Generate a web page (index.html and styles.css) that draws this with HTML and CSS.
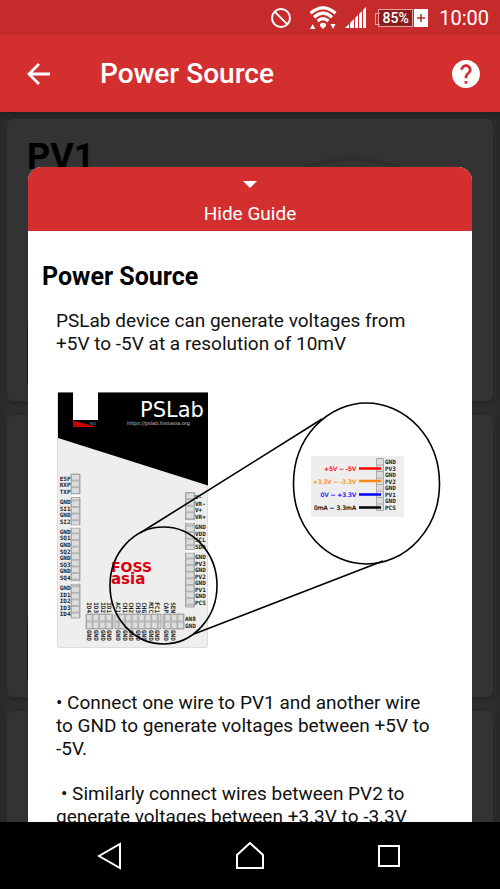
FILE: index.html
```html
<!DOCTYPE html>
<html lang="en">
<head>
<meta charset="utf-8">
<meta name="viewport" content="width=device-width, initial-scale=1">
<title>Power Source</title>
<link rel="stylesheet" href="styles.css">
</head>
<body>
<div class="status">
  <svg class="ic-block" viewBox="0 0 22 22"><circle cx="11" cy="11" r="9" fill="none" stroke="#fff" stroke-width="2"/><path d="M4.6 4.6l12.8 12.8" stroke="#fff" stroke-width="2"/></svg>
  <svg class="ic-wifi" viewBox="0 0 28 24"><g fill="none" stroke="#fff" stroke-width="3.2"><path d="M1.500 7.2Q14-3.400 26.500 7.2"/><path d="M5 11.2Q14 3.200 23 11.2"/><path d="M8.600 15Q14 10.200 19.400 15"/></g><path d="M11 18q3-2.500 6 0v2l-3 3-3-3z" fill="#fff"/><path d="M1 23l2.700-5 2.700 5zM21.500 18h5l-2.500 5z" fill="#fff"/></svg>
  <svg class="ic-signal" viewBox="0 0 22 22"><path d="M0 21l4-4v4H0zM5 16l4-4v9H5zM10 11l3-3v13h-3zM14 7l3-3v17h-3zM18 3l3-3v21h-3z" fill="#fff"/></svg>
  <span class="battery"><span class="battery-level">85%</span><svg class="ic-plus" viewBox="0 0 14 18"><path d="M0 0h14v18H0z" fill="#fff"/><path d="M3 9h8M7 5v8" stroke="#b52a2a" stroke-width="1.500"/></svg></span>
  <span class="clock">10:00</span>
</div>
<header class="appbar">
  <button class="icon-btn" aria-label="Back"><svg viewBox="0 0 26 26"><path d="M24 13H4M13 3L3 13l10 10" fill="none" stroke="#fff" stroke-width="2.800"/></svg></button>
  <h1>Power Source</h1>
  <button class="icon-btn" aria-label="Help"><svg class="ic-help" viewBox="2 2 20 20"><path fill="#fff" d="M12 2C6.480 2 2 6.480 2 12s4.480 10 10 10 10-4.480 10-10S17.520 2 12 2zm1 17h-2v-2h2v2zm2.070-7.750l-.9.920C13.450 12.900 13 13.500 13 15h-2v-.5c0-1.100.450-2.100 1.170-2.830l1.240-1.260c.370-.360.590-.860.590-1.410 0-1.100-.9-2-2-2s-2 .9-2 2H8c0-2.210 1.790-4 4-4s4 1.790 4 4c0 .880-.360 1.680-.930 2.250z"/></svg></button>
</header>
<main class="stage">
  <div class="cards">
    <section class="card">
      <div class="controls"><h2>PV1</h2><div class="field"></div><div class="action"></div></div>
      <svg class="dial" viewBox="0 0 210 210"><circle cx="105" cy="105" r="102" fill="none" stroke="#2e2e2e" stroke-width="5"/><circle cx="105" cy="105" r="85" fill="#2f2f2f"/></svg>
    </section>
    <section class="card"><div class="controls"><h2></h2><div class="field"></div><div class="action"></div></div></section>
    <section class="card"><div class="controls"><h2></h2><div class="field"></div><div class="action"></div></div></section>
  </div>
  <article class="sheet">
    <button class="hide"><svg viewBox="0 0 14 7"><path d="M0 0h14L7 7z" fill="#fff"/></svg><span>Hide Guide</span></button>
    <div class="guide">
      <h2>Power Source</h2>
      <p>PSLab device can generate voltages from +5V to -5V at a resolution of 10mV</p>
      <svg class="board" viewBox="56 390 388 262" role="img" aria-label="PSLab board pins">
        <rect x="57.500" y="392.500" width="150" height="255" rx="2" fill="#eee" stroke="#ddd"/>
        <path d="M58 392.500h150v93L58 438z"/>
        <path d="M73 392h25v28H73z" fill="#fff"/><path d="M73 420.500l24 6.500H73z" fill="#c00"/>
        <text class="tiny" x="90" y="425">SI1</text>
        <text class="brand" x="140" y="417">PSLab</text>
        <text class="url" x="127" y="425">https://pslab.fossasia.org</text>
        <defs>
          <pattern id="cell-l" x="71" y="474" width="9" height="6.600" patternUnits="userSpaceOnUse"><path d="M.500.500h8v5.600h-8z" fill="#ddd" stroke="#b4b4b4"/></pattern>
          <pattern id="cell-r" x="185.500" y="492.500" width="9" height="6.600" patternUnits="userSpaceOnUse"><path d="M.500.500h8v5.600h-8z" fill="#ddd" stroke="#b4b4b4"/></pattern>
          <pattern id="cell-b" x="86" y="614" width="6.530" height="7.500" patternUnits="userSpaceOnUse"><path d="M.500.500h5.530v6.500H.500z" fill="#ddd" stroke="#b4b4b4"/></pattern>
        </defs>
        <g stroke="#999" stroke-width=".8">
          <path fill="url(#cell-l)" d="M71 474h9v20h-9zM71 497.500h9V525h-9zM71 528h9v53h-9zM71 584h9v34h-9z"/>
          <path fill="url(#cell-r)" d="M185.500 492.500h9V520h-9zM185.500 523h9v26.500h-9zM185.500 553h9v54h-9z"/>
          <path fill="url(#cell-b)" d="M86 614h27v15H86zM115 614h46v15h-46zM163 614h21v15h-21z"/>
        </g>
        <path d="M71.500 494.500h8v2.500h-8zM71.500 525.500h8v2h-8zM71.500 581.500h8v2h-8zM186 520.500h8v2h-8zM186 550h8v2.500h-8z" fill="#fff"/>
        <text class="pin end"><tspan x="70.500" y="480.500">ESP</tspan><tspan x="70.500" y="487">RXP</tspan><tspan x="70.500" y="493.500">TXP</tspan><tspan x="70.500" y="504">GND</tspan><tspan x="70.500" y="510.500">SI1</tspan><tspan x="70.500" y="517">GND</tspan><tspan x="70.500" y="523.500">SI2</tspan><tspan x="70.500" y="533.500">GND</tspan><tspan x="70.500" y="540">SQ1</tspan><tspan x="70.500" y="547">GND</tspan><tspan x="70.500" y="553.500">SQ2</tspan><tspan x="70.500" y="560">GND</tspan><tspan x="70.500" y="566.500">SQ3</tspan><tspan x="70.500" y="573">GND</tspan><tspan x="70.500" y="579.500">SQ4</tspan><tspan x="70.500" y="590">GND</tspan><tspan x="70.500" y="596.500">ID1</tspan><tspan x="70.500" y="603">ID2</tspan><tspan x="70.500" y="609.500">ID3</tspan><tspan x="70.500" y="616">ID4</tspan></text>
        <text class="pin"><tspan x="195" y="499">V-</tspan><tspan x="195" y="505.500">VR-</tspan><tspan x="195" y="512">V+</tspan><tspan x="195" y="518.500">VR+</tspan><tspan x="195" y="529">GND</tspan><tspan x="195" y="535.500">VDD</tspan><tspan x="195" y="542">SCL</tspan><tspan x="195" y="548.500">SDA</tspan><tspan x="195" y="559">GND</tspan><tspan x="195" y="565.500">PV3</tspan><tspan x="195" y="572">GND</tspan><tspan x="195" y="578.500">PV2</tspan><tspan x="195" y="585">GND</tspan><tspan x="195" y="591.500">PV1</tspan><tspan x="195" y="598">GND</tspan><tspan x="195" y="604.500">PCS</tspan><tspan x="185" y="621">AN8</tspan><tspan x="185" y="628">GND</tspan></text>
        <g transform="rotate(90)">
          <text class="pin end"><tspan x="613" y="-87">ID4</tspan><tspan x="613" y="-94">ID3</tspan><tspan x="613" y="-100.500">ID2</tspan><tspan x="613" y="-107">ID1</tspan><tspan x="613" y="-116">AC1</tspan><tspan x="613" y="-122.500">CH1</tspan><tspan x="613" y="-129">CH2</tspan><tspan x="613" y="-135.500">CH3</tspan><tspan x="613" y="-142">CHG</tspan><tspan x="613" y="-148.500">MIC</tspan><tspan x="613" y="-155">FC1</tspan><tspan x="613" y="-164">CAP</tspan><tspan x="613" y="-170.500">SEN</tspan></text>
          <text class="pin"><tspan x="630" y="-87">GND</tspan><tspan x="630" y="-94">GND</tspan><tspan x="630" y="-100.500">GND</tspan><tspan x="630" y="-107">GND</tspan><tspan x="630" y="-116">GND</tspan><tspan x="630" y="-122.500">GND</tspan><tspan x="630" y="-129">GND</tspan><tspan x="630" y="-135.500">GND</tspan><tspan x="630" y="-142">GND</tspan><tspan x="630" y="-148.500">GND</tspan><tspan x="630" y="-155">GND</tspan><tspan x="630" y="-164">GND</tspan><tspan x="630" y="-170.500">GND</tspan></text>
        </g>
        <text class="foss" x="111" y="572">FOSS</text><text class="asia" x="111" y="584">asia</text>
        <rect x="311" y="456" width="93" height="61" fill="#eee"/>
        <path d="M376.500 458.500h7v52h-7zM376.500 465h7M376.500 471.500h7M376.500 478h7M376.500 484.500h7M376.500 491h7M376.500 497.500h7M376.500 504h7" fill="#ddd" stroke="#aaa"/>
        <g stroke-width="2.500"><path d="M359 468.500h22" stroke="#f00"/><path d="M359 481h22" stroke="#ff8a11"/><path d="M359 494.500h22" stroke="#00f"/><path d="M359 507.500h22" stroke="#000"/></g>
        <text class="pin"><tspan x="385" y="464">GND</tspan><tspan x="385" y="470.500">PV3</tspan><tspan x="385" y="477">GND</tspan><tspan x="385" y="483.500">PV2</tspan><tspan x="385" y="490">GND</tspan><tspan x="385" y="496.500">PV1</tspan><tspan x="385" y="503">GND</tspan><tspan x="385" y="510">PCS</tspan></text>
        <text class="range"><tspan x="356" y="471" fill="#f00" stroke="#f00">+5V ~ -5V</tspan><tspan x="356" y="483.500" fill="#ff8a11" stroke="#ff8a11">+3.3V ~ -3.3V</tspan><tspan x="356" y="496.500" fill="#00f" stroke="#00f">0V ~ +3.3V</tspan><tspan x="356" y="509.500" stroke="#000">0mA ~ 3.3mA</tspan></text>
        <g fill="none" stroke="#000" stroke-width="1.600"><ellipse cx="163.500" cy="585.500" rx="53.500" ry="58.500"/><ellipse cx="366.500" cy="483.500" rx="73" ry="80.500"/><path d="M140 533L322 419M194 634L383 561"/></g>
      </svg>
      <p>• Connect one wire to PV1 and another wire to GND to generate voltages between +5V to -5V.</p>
      <p class="indent">• Similarly connect wires between PV2 to generate voltages between +3.3V to -3.3V</p>
    </div>
  </article>
</main>
<nav class="navbar">
  <button aria-label="Back"><svg viewBox="0 0 28 28"><path d="M23 2v24L2 14z"/></svg></button>
  <button aria-label="Home"><svg viewBox="0 0 28 28"><path d="M14 1L1 13v13h26V13z"/></svg></button>
  <button aria-label="Recent apps"><svg viewBox="0 0 28 28"><path d="M4 4h20v20H4z"/></svg></button>
</nav>
</body>
</html>
```
FILE: styles.css
```css
* { box-sizing: border-box; }
body {
  margin: 0;
  height: 100vh;
  display: flex;
  flex-direction: column;
  overflow: hidden;
  font-family: Roboto, "Liberation Sans", sans-serif;
  color: #111;
}
button { border: 0; padding: 0; background: none; color: inherit; font: inherit; }
svg { display: block; }
h1, h2, p { margin: 0; }

.status {
  flex: none;
  height: 35px;
  padding: 0 11px;
  display: flex;
  align-items: center;
  justify-content: flex-end;
  background: #c62b2b;
  color: #fff;
}
.ic-block { width: 22px; margin-right: 17px; }
.ic-wifi { width: 28px; margin-right: 8px; }
.ic-signal { width: 22px; margin-right: 11px; }
.battery { display: flex; align-items: center; margin-right: 11px; }
.battery-level {
  position: relative;
  width: 35px;
  height: 18px;
  margin-right: 1px;
  border: 1px solid #e6a3a3;
  background: #8a1e1e;
  font-size: 14px;
  line-height: 17px;
  font-weight: 500;
  text-align: center;
}
.battery-level::before {
  content: "";
  position: absolute;
  left: -4px;
  top: 3px;
  width: 4px;
  height: 10px;
  border: 1px solid #e6a3a3;
  border-right: 0;
}
.ic-plus { width: 14px; }
.clock { font-size: 20px; }

.appbar {
  flex: none;
  height: 77px;
  padding: 0 20px 0 26px;
  display: flex;
  align-items: center;
  background: #d32f2f;
  color: #fff;
}
.appbar h1 { flex: 1; margin-left: 48px; font-size: 28px; font-weight: 500; }
.icon-btn svg { width: 26px; }
.icon-btn .ic-help { width: 28px; }

.stage { position: relative; flex: 1; min-height: 0; overflow: hidden; background: #2d2d2d; box-shadow: inset 0 5px 5px #242424; }
.cards { padding: 7px; display: flex; flex-direction: column; gap: 14px; }
.card {
  flex: none;
  height: 282px;
  padding: 20px;
  display: flex;
  justify-content: space-between;
  border-radius: 6px;
  background: #333;
  box-shadow: 0 2px 4px #232323;
}
.controls { width: 170px; }
.card h2 { height: 36px; font-size: 36px; line-height: 36px; color: #000; }
.field { height: 83px; margin-top: 25px; border: 1px solid #382c2c; border-radius: 4px; }
.action { height: 65px; margin-top: 37px; border-radius: 2px; background: #3a0f0f; }
.dial { width: 210px; margin-right: 16px; }

.sheet {
  position: absolute;
  top: 55px;
  bottom: 0;
  left: 28px;
  right: 28px;
  overflow: hidden;
  border-radius: 14px 14px 0 0;
  background: #fff;
}
.hide {
  width: 100%;
  height: 64px;
  padding-top: 14px;
  display: flex;
  flex-direction: column;
  align-items: center;
  gap: 14px;
  background: #d32f2f;
  color: #fff;
  font-size: 19px;
  line-height: 24px;
}
.hide svg { width: 14px; }
.guide { padding: 32px 28px 0; font-size: 19px; line-height: 23px; }
.guide h2 { margin: 0 0 18px -14px; font-size: 25px; line-height: 28px; font-weight: 700; color: #000; }
.guide p { padding-right: 4px; }
.board { width: 100%; margin: 35px 0 39px; }
.indent { margin-top: 22px; text-indent: 5px; }

.pin { font: bold 6px "DejaVu Sans Mono", monospace; fill: #222; }
.end { text-anchor: end; }
.brand { font: 21px "DejaVu Sans", sans-serif; fill: #fff; }
.url { font: 5px "DejaVu Sans", sans-serif; fill: #ccc; }
.tiny { font: 4px "DejaVu Sans", sans-serif; fill: #aaa; }
.foss { font: bold 14px "DejaVu Sans", sans-serif; fill: #d9000d; }
.asia { font: bold 15px "DejaVu Sans", sans-serif; fill: #d9000d; }
.range { font: 6px "DejaVu Sans", sans-serif; text-anchor: end; stroke-width: 0.2; }

.navbar { flex: none; height: 67px; display: flex; align-items: center; justify-content: center; gap: 111px; background: #000; }
.navbar svg { width: 28px; fill: none; stroke: #fff; stroke-width: 2; }
```
